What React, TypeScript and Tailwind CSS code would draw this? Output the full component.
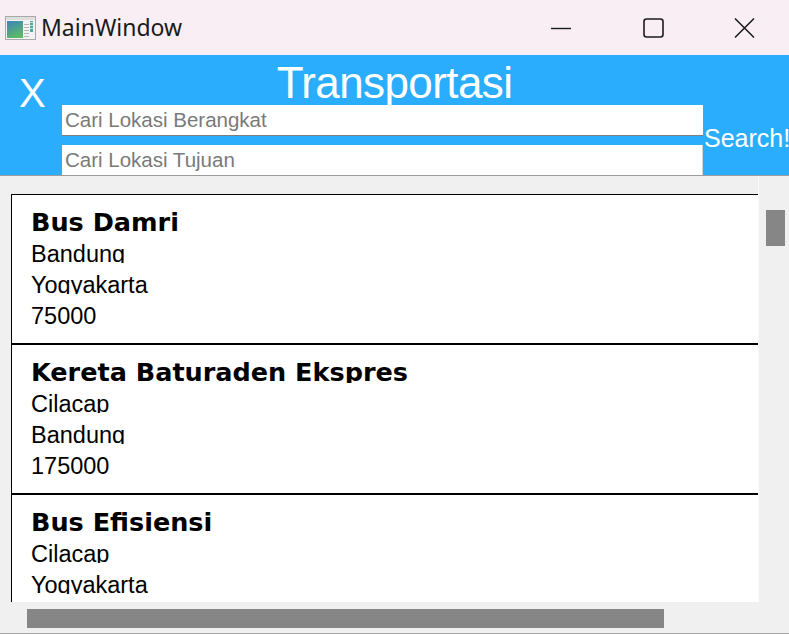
import React from "react";

type Route = {
  name: string;
  from: string;
  to: string;
  price: string;
};

const routes: Route[] = [
  { name: "Bus Damri", from: "Bandung", to: "Yogyakarta", price: "75000" },
  { name: "Kereta Baturaden Ekspres", from: "Cilacap", to: "Bandung", price: "175000" },
  { name: "Bus Efisiensi", from: "Cilacap", to: "Yogyakarta", price: "90000" },
];

const AppIcon = () => (
  <svg width="31" height="24" viewBox="0 0 31 24">
    <defs>
      <linearGradient id="appgrad" x1="0" y1="0" x2="0.4" y2="1">
        <stop offset="0" stopColor="#3d83b8" />
        <stop offset="1" stopColor="#5db86a" />
      </linearGradient>
    </defs>
    <rect x="0.5" y="0.5" width="30" height="23" fill="#f3f3f3" stroke="#a9a9a9" />
    <rect x="1" y="1" width="29" height="3" fill="#dedede" />
    <rect x="2" y="5" width="16" height="17" fill="url(#appgrad)" />
    <rect x="19" y="8" width="5" height="1" fill="#b5b5b5" />
    <rect x="19" y="11" width="5" height="1" fill="#b5b5b5" />
    <rect x="19" y="14" width="5" height="1" fill="#b5b5b5" />
    <rect x="19" y="17" width="5" height="1" fill="#b5b5b5" />
    <rect x="19" y="20" width="5" height="1" fill="#b5b5b5" />
    <rect x="25" y="5" width="3" height="11" fill="#4fa8a0" />
    <rect x="25" y="6" width="3" height="1" fill="#b9e0dc" />
    <rect x="25" y="9" width="3" height="1" fill="#b9e0dc" />
    <rect x="25" y="12" width="3" height="1" fill="#b9e0dc" />
  </svg>
);

const TitleBar = () => (
  <div className="h-[55px] shrink-0 flex items-center bg-[#f8eef4]">
    <div className="ml-[5px] flex items-center">
      <AppIcon />
    </div>
    <span className="ml-[5px] text-[23px] text-[#1a1a1a] font-['Noto_Sans',sans-serif] leading-none">
      MainWindow
    </span>
    <div className="ml-auto flex h-full">
      <div className="w-[92px] flex items-center justify-center">
        <svg width="20" height="20" viewBox="0 0 20 20">
          <line x1="0" y1="10.5" x2="20" y2="10.5" stroke="#1b1b1b" strokeWidth="1.4" />
        </svg>
      </div>
      <div className="w-[92px] flex items-center justify-center">
        <svg width="21" height="20" viewBox="0 0 21 20">
          <rect x="1" y="1" width="19" height="18" rx="2.5" fill="none" stroke="#1b1b1b" strokeWidth="1.6" />
        </svg>
      </div>
      <div className="w-[90px] flex items-center justify-center">
        <svg width="21" height="20" viewBox="0 0 21 20">
          <path d="M1 0.5 L20 19.5 M20 0.5 L1 19.5" stroke="#1b1b1b" strokeWidth="1.5" />
        </svg>
      </div>
    </div>
  </div>
);

const Header = () => (
  <div className="shrink-0 grid grid-cols-[62px_641px_1fr] grid-rows-[50px_31px_9px_30px] bg-[#2badfe] border-b border-[#9c9c9c] text-white">
    <div className="col-start-1 col-span-3 row-start-1 self-end text-center text-[44px] leading-none tracking-[-0.6px]">
      Transportasi
    </div>
    <div className="col-start-1 row-start-1 row-span-2 pt-[18px] pl-[19px] text-[40px] leading-none">
      X
    </div>
    <div className="col-start-2 row-start-2 bg-white border-b border-[#7d7d7d] flex items-center pl-[3px] text-[20.5px] text-[#7a7a7a] leading-none">
      Cari Lokasi Berangkat
    </div>
    <div className="col-start-2 row-start-4 bg-white border-r border-[#d4d4d4] flex items-center pl-[3px] text-[20.5px] text-[#7a7a7a] leading-none">
      Cari Lokasi Tujuan
    </div>
    <div className="col-start-3 row-start-2 row-span-3 pt-[21px] pl-[1px] text-[25px] leading-none whitespace-nowrap overflow-hidden">
      Search!
    </div>
  </div>
);

const RouteItem = ({ route }: { route: Route }) => (
  <div className="h-[150px] w-[900px] shrink-0 bg-white border border-black pl-[19px] pt-[15px] flex flex-col text-black">
    <div className="h-[23px] overflow-hidden font-['DejaVu_Sans',sans-serif] font-bold text-[25.5px] leading-none whitespace-nowrap">
      {route.name}
    </div>
    <div className="mt-[10px] flex flex-col gap-[11px] text-[23.5px] leading-none">
      <div className="h-[20px] overflow-hidden">{route.from}</div>
      <div className="h-[20px] overflow-hidden">{route.to}</div>
      <div className="h-[20px] overflow-hidden">{route.price}</div>
    </div>
  </div>
);

export default function App() {
  return (
    <div className="w-[789px] h-[634px] flex flex-col overflow-hidden bg-[#f0f0f0] font-['Liberation_Sans',Arial,sans-serif]">
      <TitleBar />
      <Header />
      <div className="flex-1 min-h-0 flex flex-col border-b border-[#a8a8a8]">
        <div className="flex-1 min-h-0 flex">
          <div className="flex-1 min-w-0 overflow-hidden pt-[18px] pl-[11px]">
            <div className="flex flex-col">
              {routes.map((r) => (
                <RouteItem key={r.name} route={r} />
              ))}
            </div>
          </div>
          <div className="w-[31px] shrink-0 border-l border-[#fafafa] pt-[34px] pl-[7px]">
            <div className="w-[19px] h-[36px] bg-[#868686]" />
          </div>
        </div>
        <div className="h-[31px] shrink-0 pt-[7px] pl-[27px]">
          <div className="w-[637px] h-[19px] bg-[#868686]" />
        </div>
      </div>
    </div>
  );
}
